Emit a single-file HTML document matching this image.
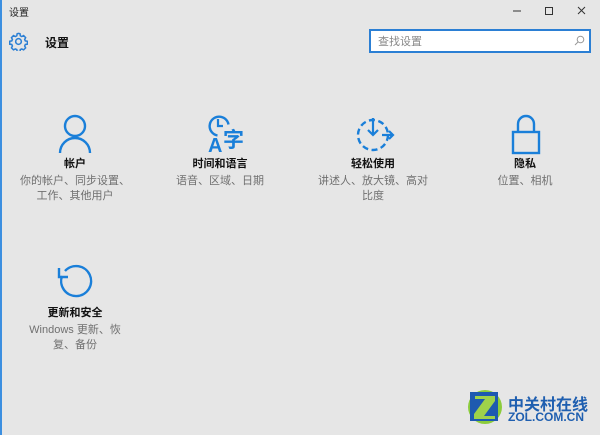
<!DOCTYPE html><html><head><meta charset="utf-8"><style>
body{margin:0;width:600px;height:435px;background:#e6e6e6;position:relative;overflow:hidden;font-family:"Liberation Sans","Noto Sans CJK SC",sans-serif}
.a{position:absolute}
.t{position:absolute;width:140px;text-align:center}
.tt{font-size:11px;color:#111;font-weight:bold;line-height:15px;margin-bottom:2px}
.d{font-size:11px;color:#707070;line-height:14.5px}
</style></head><body>
<div class="a" style="left:0;top:0;width:2px;height:435px;background:#3c8fe0"></div>
<div class="a" style="left:9px;top:4px;font-size:10px;color:#222">设置</div>
<svg class="a" style="left:505px;top:4px" width="95" height="14"><line x1="8" y1="7" x2="16" y2="7" stroke="#333"/><rect x="40.5" y="3.5" width="7" height="7" fill="none" stroke="#333"/><path d="M73 3l7 7M80 3l-7 7" stroke="#333"/></svg>
<svg class="a" style="left:9px;top:32px" width="19" height="19" viewBox="0 0 20 20"><path d="M10 1.5l1.6 .3.3 2.2 1.5.8 2-1 2.1 2.1-1 2 .7 1.5 2.2.4v3l-2.2.3-.7 1.6 1 2-2.1 2.1-2-1-1.5.7-.3 2.2h-3l-.4-2.2-1.5-.7-2 1-2.1-2.1 1-2-.7-1.6-2.2-.3v-3l2.2-.4.7-1.5-1-2 2.1-2.1 2 1 1.5-.8.4-2.2z" fill="none" stroke="#2b7fd4" stroke-width="1.6"/><circle cx="10" cy="10" r="3" fill="none" stroke="#2b7fd4" stroke-width="1.6"/></svg>
<div class="a" style="left:45px;top:34px;font-size:12px;font-weight:bold;color:#111">设置</div>
<div class="a" style="left:369px;top:29px;width:218px;height:20px;border:2px solid #2b7fd4;background:#fff"></div>
<div class="a" style="left:378px;top:33px;font-size:11px;color:#888">查找设置</div>
<svg class="a" style="left:574px;top:35px" width="11" height="11"><circle cx="6.5" cy="4.5" r="3.3" fill="none" stroke="#999"/><line x1="4" y1="7" x2="1" y2="10" stroke="#999"/></svg>

<svg class="a" style="left:55px;top:112px" width="40" height="42"><circle cx="20" cy="14" r="10" fill="none" stroke="#1a7fd9" stroke-width="2.4"/><path d="M5 41a15 15 0 0 1 30 0" fill="none" stroke="#1a7fd9" stroke-width="2.4"/></svg>
<svg class="a" style="left:203px;top:112px" width="45" height="42"><path d="M14.5 23.5a9.5 9.5 0 1 1 11-11" fill="none" stroke="#1a7fd9" stroke-width="2.4"/><path d="M15 7v7h5" fill="none" stroke="#1a7fd9" stroke-width="2.2"/><text x="5" y="40" font-size="20" font-weight="bold" fill="#1a7fd9" font-family="Liberation Sans,sans-serif">A</text><text x="20" y="35" font-size="21" font-weight="bold" fill="#1a7fd9" font-family="Noto Sans CJK SC,sans-serif">字</text></svg>
<svg class="a" style="left:355px;top:115px" width="40" height="40"><circle cx="18" cy="20" r="15" fill="none" stroke="#1a7fd9" stroke-width="2.4" stroke-dasharray="6 3.5"/><path d="M18 3v17M13 15l5 5 5-5M27 20h11M34 16l4 4-4 4" fill="none" stroke="#1a7fd9" stroke-width="2.2"/></svg>
<svg class="a" style="left:510px;top:113px" width="32" height="42"><path d="M8 19v-8a8 8 0 0 1 16 0v8" fill="none" stroke="#1a7fd9" stroke-width="2.4"/><rect x="3" y="19" width="26" height="21" fill="none" stroke="#1a7fd9" stroke-width="2.4"/></svg>
<svg class="a" style="left:55px;top:262px" width="42" height="42"><path d="M10 9a15 15 0 1 1 -3 5" fill="none" stroke="#1a7fd9" stroke-width="2.4"/><path d="M4 6v9h9" fill="none" stroke="#1a7fd9" stroke-width="2.4"/></svg>

<div class="t" style="left:5px;top:157px"><div class="tt">帐户</div><div class="d">你的帐户、同步设置、<br>工作、其他用户</div></div>
<div class="t" style="left:150px;top:157px"><div class="tt">时间和语言</div><div class="d">语音、区域、日期</div></div>
<div class="t" style="left:303px;top:157px"><div class="tt">轻松使用</div><div class="d">讲述人、放大镜、高对<br>比度</div></div>
<div class="t" style="left:455px;top:157px"><div class="tt">隐私</div><div class="d">位置、相机</div></div>
<div class="t" style="left:5px;top:306px"><div class="tt">更新和安全</div><div class="d">Windows 更新、恢<br>复、备份</div></div>

<svg class="a" style="left:466px;top:388px" width="38" height="37"><circle cx="19" cy="19" r="17" fill="#8ccc3c"/><rect x="4" y="4" width="28" height="29" fill="#1e5ab0"/><path d="M9 8h20v5L18 28h11v3H8v-5L19 11H9z" fill="#9fd24a"/></svg>
<div class="a" style="left:508px;top:391px;font-size:16px;font-weight:bold;color:#1f5fb0">中关村在线</div>
<div class="a" style="left:508px;top:410px;font-size:12px;font-weight:bold;color:#1f5fb0">ZOL.COM.CN</div>
</body></html>
